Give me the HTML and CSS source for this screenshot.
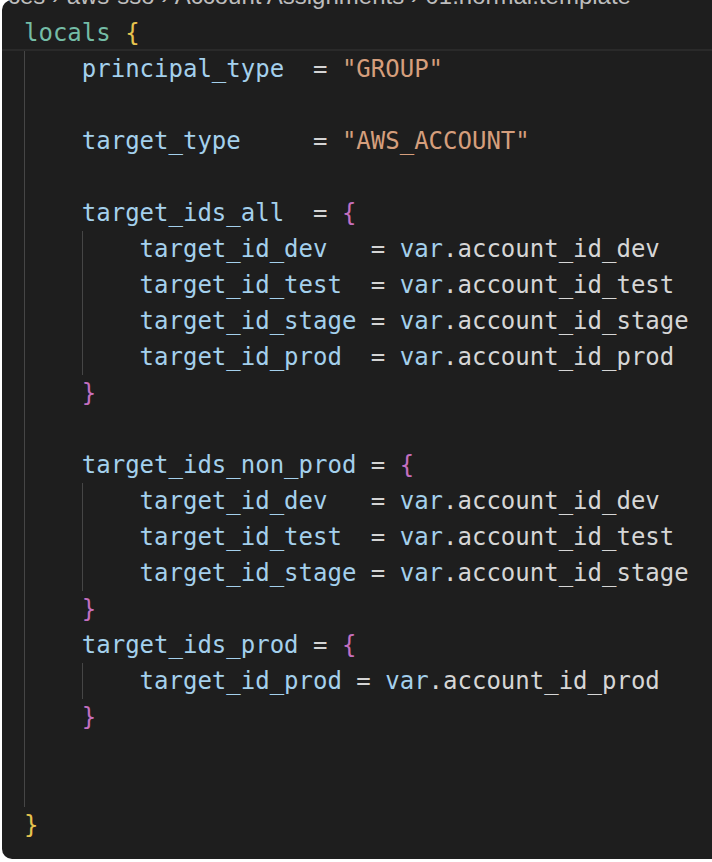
FILE: index.html
```html
<!DOCTYPE html>
<html>
<head>
<meta charset="utf-8">
<link rel="stylesheet" href="styles.css">
</head>
<body>
<div class="editor">
  <div class="crumbs"><div class="crumb-text">ces › aws-sso › Account Assignments › 01.normal.template</div></div>
  <div class="code">
    <div class="ln cur"><span class="kw">locals</span> <span class="b1">{</span></div>
    <div class="ln"><span class="ind"></span><span class="id">principal_type</span>  <span class="op">=</span> <span class="str">"GROUP"</span></div>
    <div class="ln"><span class="ind"></span></div>
    <div class="ln"><span class="ind"></span><span class="id">target_type</span>     <span class="op">=</span> <span class="str">"AWS_ACCOUNT"</span></div>
    <div class="ln"><span class="ind"></span></div>
    <div class="ln"><span class="ind"></span><span class="id">target_ids_all</span>  <span class="op">=</span> <span class="b2">{</span></div>
    <div class="ln"><span class="ind"></span><span class="ind"></span><span class="id">target_id_dev</span>   <span class="op">=</span> <span class="id">var</span><span class="pl">.account_id_dev</span></div>
    <div class="ln"><span class="ind"></span><span class="ind"></span><span class="id">target_id_test</span>  <span class="op">=</span> <span class="id">var</span><span class="pl">.account_id_test</span></div>
    <div class="ln"><span class="ind"></span><span class="ind"></span><span class="id">target_id_stage</span> <span class="op">=</span> <span class="id">var</span><span class="pl">.account_id_stage</span></div>
    <div class="ln"><span class="ind"></span><span class="ind"></span><span class="id">target_id_prod</span>  <span class="op">=</span> <span class="id">var</span><span class="pl">.account_id_prod</span></div>
    <div class="ln"><span class="ind"></span><span class="b2">}</span></div>
    <div class="ln"><span class="ind"></span></div>
    <div class="ln"><span class="ind"></span><span class="id">target_ids_non_prod</span> <span class="op">=</span> <span class="b2">{</span></div>
    <div class="ln"><span class="ind"></span><span class="ind"></span><span class="id">target_id_dev</span>   <span class="op">=</span> <span class="id">var</span><span class="pl">.account_id_dev</span></div>
    <div class="ln"><span class="ind"></span><span class="ind"></span><span class="id">target_id_test</span>  <span class="op">=</span> <span class="id">var</span><span class="pl">.account_id_test</span></div>
    <div class="ln"><span class="ind"></span><span class="ind"></span><span class="id">target_id_stage</span> <span class="op">=</span> <span class="id">var</span><span class="pl">.account_id_stage</span></div>
    <div class="ln"><span class="ind"></span><span class="b2">}</span></div>
    <div class="ln"><span class="ind"></span><span class="id">target_ids_prod</span> <span class="op">=</span> <span class="b2">{</span></div>
    <div class="ln"><span class="ind"></span><span class="ind"></span><span class="id">target_id_prod</span> <span class="op">=</span> <span class="id">var</span><span class="pl">.account_id_prod</span></div>
    <div class="ln"><span class="ind"></span><span class="b2">}</span></div>
    <div class="ln"><span class="ind"></span></div>
    <div class="ln"><span class="ind"></span></div>
    <div class="ln"><span class="b1">}</span></div>
  </div>
</div>
</body>
</html>
```
FILE: styles.css
```css
html, body {
  margin: 0;
  padding: 0;
  background: #ffffff;
}
body {
  width: 712px;
  height: 862px;
  overflow: hidden;
}
.editor {
  margin-left: 2px;
  height: 859px;
  background: #1e1e1e;
  border-radius: 10px 0 0 10px;
  overflow: hidden;
}
.crumbs {
  height: 15px;
  overflow: hidden;
  padding-left: 6px;
}
.crumb-text {
  margin-top: -16px;
  font-family: "Liberation Sans", Arial, sans-serif;
  font-size: 24px;
  line-height: 24px;
  color: #bdbdbd;
  white-space: nowrap;
}
.code {
  padding-left: 22px;
  font-family: "DejaVu Sans Mono", "Liberation Mono", monospace;
  font-size: 24px;
  color: #d4d4d4;
}
.ln {
  height: 36px;
  line-height: 36px;
  white-space: pre;
}
.cur {
  box-shadow: inset 0 -2px 0 #2a2a2a;
  margin-left: -22px;
  padding-left: 22px;
}
.ind {
  display: inline-block;
  width: 4ch;
  height: 36px;
  vertical-align: top;
  box-shadow: inset 1px 0 0 #464646;
}
.kw { color: #74bca6; }
.id { color: #a4d0ec; }
.pl { color: #d6d6d6; }
.op { color: #d4d4d4; }
.str { color: #d59e7c; }
.b1 { color: #e6c34e; }
.b2 { color: #c46fbf; }
```
